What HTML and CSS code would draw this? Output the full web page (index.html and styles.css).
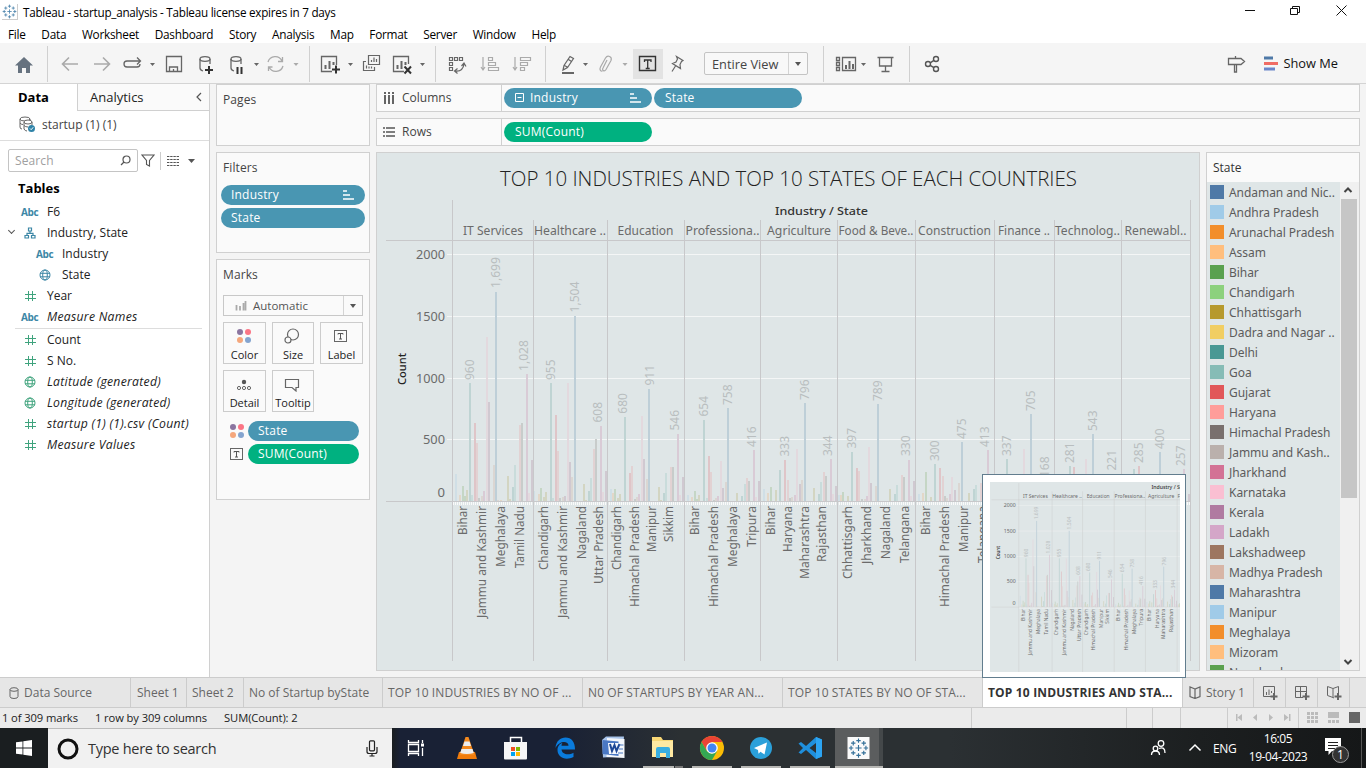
FILE: index.html
```html
<!DOCTYPE html>
<html lang="en">
<head>
<meta charset="utf-8">
<title>Tableau - startup_analysis</title>
<link rel="stylesheet" href="styles.css">
</head>
<body>
<svg class="defs" width="0" height="0">
  <defs>
    <symbol id="i-hash" viewBox="0 0 12 12"><path d="M4.500 1v10M8.500 1v10M1 4.500h11M1 8.500h11" fill="none" stroke="currentColor"/></symbol>
    <symbol id="i-globe" viewBox="0 0 12 12"><g fill="none" stroke="currentColor"><circle cx="6" cy="6" r="5"/><ellipse cx="6" cy="6" rx="2.300" ry="5"/><path d="M1 4.300h10M1 7.800h10"/></g></symbol>
    <symbol id="i-tree" viewBox="0 0 12 12"><path d="M4.500 1h3v3h-3zM1 8.500h3.500v2.500h-3.500zM7.500 8.500h3.500v2.500h-3.500zM6 4v2M3 8.500V6.300h6v2.200" fill="none" stroke="currentColor" stroke-width="1.200"/></symbol>
    <symbol id="i-sort" viewBox="0 0 11 10"><path d="M0 1h4M0 5h7M0 9h11" fill="none" stroke="#fff" stroke-width="1.600"/></symbol>
    <symbol id="i-dots" viewBox="0 0 16 16"><circle cx="4" cy="4" r="3" fill="#8b75a0"/><circle cx="12" cy="4" r="3" fill="#fb7585"/><circle cx="4" cy="12" r="3" fill="#f5a77c"/><circle cx="12" cy="12" r="3" fill="#84a4cf"/></symbol>
    <symbol id="i-text" viewBox="0 0 14 14"><rect x=".5" y="1.500" width="12" height="11" fill="none" stroke="#666"/><path d="M4 5.500V4.500h5v1M6.500 4.500v5.500M5 10h3" fill="none" stroke="#555"/></symbol>
    <symbol id="i-tableau" viewBox="0 0 24 24"><path d="M12 8.500v7M8.500 12h7M12 1v5M9.500 3.500h5M12 18v5M9.500 20.500h5M1 12h5M3.500 9.500v5M18 12h5M20.500 9.500v5M6 4v5M3.500 6.500h5M18 4v5M15.500 6.500h5M6 15v5M3.500 17.500h5M18 15v5M15.500 17.500h5" fill="none" stroke="currentColor" stroke-width="1.300"/></symbol>
  </defs>
</svg>

<header class="titlebar">
  <svg class="appicon" width="16" height="16" viewBox="0 0 24 24"><use href="#i-tableau"/></svg>
  <span class="apptitle">Tableau - startup_analysis - Tableau license expires in 7 days</span>
  <svg class="winbtns" width="130" height="24" viewBox="1236 0 130 24" fill="none" stroke="#111"><path d="M1245 10.500h10M1290.500 8.500h7v6h-7zM1292.500 8.500v-2h7v6h-2M1336.500 5.500l10 10M1346.500 5.500l-10 10"/></svg>
</header>
<nav class="menu">
  <span>File</span><span>Data</span><span>Worksheet</span><span>Dashboard</span><span>Story</span><span>Analysis</span><span>Map</span><span>Format</span><span>Server</span><span>Window</span><span>Help</span>
</nav>

<div class="toolbar">
  <svg class="grp" width="48" height="36" viewBox="0 46 48 36"><path d="M15 65.500L24 57l9 8.500h-3V73h-4v-5h-4v5h-4v-7.500z" fill="#66727f"/></svg>
  <svg class="grp" width="262" height="36" viewBox="48 46 262 36" fill="none" stroke="#666" stroke-width="1.300">
    <path d="M63 64h15M69 57.500L62.500 64l6.500 6.500M94 64h15M103 57.500l6.500 6.500-6.500 6.500" stroke="#aaa" stroke-width="1.600"/>
    <path d="M140 61h-13a3 3 0 0 0-3 3v0a3 3 0 0 0 3 3h10a3 3 0 0 0 3-3M137 57.500l3.500 3.500-3.500 3.500"/>
    <path d="M150 63h5l-2.500 3zM254 63h5l-2.500 3z" fill="#666" stroke="none"/><path d="M293.500 63h5l-2.500 3z" fill="#aaa" stroke="none"/>
    <path d="M166.500 56.500h15v15h-15zM169.500 71v-4h8v4M173.500 69v2"/>
    <g id="db"><ellipse cx="205" cy="59" rx="5" ry="2.300"/><path d="M200 59v9q0 2 3 3M210 59v5"/></g>
    <path d="M209 66v8M205 70h8" stroke="#333" stroke-width="2"/>
    <use href="#db" x="31"/><path d="M237.500 67v7M241.500 67v7" stroke="#333" stroke-width="2"/>
    <path d="M268 62a7.500 7.500 0 0 1 14-1M283 66a7.500 7.500 0 0 1-14 1M282.500 57v4.500H278M268.500 71v-4h4" stroke="#aaa"/>
  </svg>
  <svg class="grp" width="126" height="36" viewBox="310 46 126 36" fill="none" stroke="#666">
    <path d="M332 71.500h-10.500v-15h15V65" stroke-width="1.300"/><path d="M325.500 69v-4M329.500 69v-8M333.500 65v-3" stroke-width="2"/><path d="M336 65.500v8M332 69.500h8" stroke="#333" stroke-width="2"/>
    <path d="M348 63h5l-2.500 3zM420 63h5l-2.500 3z" fill="#666" stroke="none"/>
    <path d="M368.500 55.500h11v9h-11zM366 61.500h-2.500v9h11V67M371.500 62v-2M374 62v-4.500M376.500 62v-3M366.500 68.500v-3M369 68.500v-2M371.500 68.500v-2" stroke-width="1.200"/>
    <path d="M404 71.500h-10.500v-15h15V64" stroke-width="1.300"/><path d="M397.500 69v-4M401.500 69v-8M405.500 65v-3" stroke-width="2"/><path d="M404.500 66.500l6.500 7M411 66.500l-6.500 7" stroke="#333" stroke-width="2"/>
  </svg>
  <svg class="grp" width="110" height="36" viewBox="436 46 110 36" fill="none" stroke="#666" stroke-width="1.200">
    <path d="M449.500 57.500h3v3h-3zM454.500 57.500h3v3h-3zM459.500 57.500h3v3h-3zM449.500 62.500h3v3h-3zM449.500 67.500h3v3h-3zM455 71q8 1 9-7M461.500 66l2.500-3 2 3.500M457.500 68.500l-3 2.500 3 2.500"/>
    <g stroke="#aaa"><path d="M483 57v13M481 67l2 3 2-3M488.500 57.500h4v3h-4zM488.500 62.500h7v3h-7zM488.500 67.500h10v3h-10zM515 57v13M513 67l2 3 2-3M520.500 57.500h10v3h-10zM520.500 62.500h7v3h-7zM520.500 67.500h4v3h-4z"/></g>
  </svg>
  <svg class="plain" width="158" height="36" viewBox="546 46 158 36" fill="none" stroke="#666" stroke-width="1.200">
    <rect x="633" y="49" width="30" height="30" fill="#e3e3e3" stroke="none"/>
    <path d="M563 70l1-4.500 6-9 3.500 2-6 9zM564.500 65.500l3.500 2M568.500 59.500l3 2"/><path d="M562 73h12" stroke-width="2"/>
    <path d="M583 63h5l-2.500 3z" fill="#666" stroke="none"/><path d="M622.500 63h5l-2.500 3z" fill="#aaa" stroke="none"/>
    <path d="M607 60l-4 8c-1.500 2.500 1.500 4 3 1.500l5-9c1.500-4-3.500-6-5.500-2.500l-5 9c-1.500 3 .5 4.500 2 4" stroke="#aaa"/>
    <path d="M639.500 56.500h16v14h-16z" stroke="#333" stroke-width="1.400"/><path d="M644.500 62v-2h6.500v2M647.700 60v8.500M645.700 68.500h4" stroke="#333" stroke-width="1.300"/>
    <path d="M676.500 56.500l6.500 4-1.500 1-1.500 3 .5 4-8-5 3.500-1.500 1.500-3zM675.500 66l-3.500 5.500"/>
  </svg>
  <div class="viewsel"><span>Entire View</span><i><b class="caret"></b></i></div>
  <svg class="grp" width="102" height="36" viewBox="808 46 102 36" fill="none" stroke="#666" stroke-width="1.300">
    <path d="M823.500 46v36" stroke="#d0d0d0" stroke-width="1"/>
    <path d="M836.500 57.500h3v3h-3zM836.500 62.500h3v3h-3zM836.500 67.500h3v3h-3zM842.500 57.500h13v13h-13z"/><path d="M846 69v-4M849.500 69v-8M853 69v-5" stroke-width="2"/><path d="M861 63h5l-2.500 3z" fill="#666" stroke="none"/>
    <path d="M877.500 57.500h16M879.500 57.500v8.500h12v-8.500M885.500 66v5M881.500 71.500h8"/>
  </svg>
  <svg width="40" height="36" viewBox="910 46 40 36" fill="none" stroke="#555" stroke-width="1.400"><circle cx="928" cy="64" r="2.500"/><circle cx="936" cy="59" r="2.500"/><circle cx="936" cy="69" r="2.500"/><path d="M930.200 62.800l3.700-2.400M930.200 65.300l3.700 2.400"/></svg>
  <div class="showme">
    <svg width="56" height="36" viewBox="1224 46 56 36" fill="none"><path d="M1227.500 58.500h12.500l3.500 3-3.500 3h-12.500zM1234.500 58V56M1233.500 65v7h2v-7" stroke="#666" stroke-width="1.300"/><path d="M1263 58h9" stroke="#4e79a7" stroke-width="3"/><path d="M1263 63.500h14" stroke="#f06c64" stroke-width="3"/><path d="M1263 69h11" stroke="#6b86c9" stroke-width="3"/></svg>
    <span>Show Me</span>
  </div>
</div>

<main class="work">
  <aside class="data">
    <div class="tabs2"><b>Data</b><div>Analytics<svg width="8" height="10" viewBox="0 0 8 10"><path d="M6 1L2 5l4 4" fill="none" stroke="#555" stroke-width="1.200"/></svg></div></div>
    <div class="source"><svg width="17" height="17" viewBox="0 0 17 17" fill="none" stroke="#666"><ellipse cx="6" cy="3" rx="5" ry="2"/><path d="M1 3v8q0 2 2 2M11 3v1M1 7q1 1.500 3 1.500"/><ellipse cx="9" cy="6" rx="4" ry="2" fill="#fff"/><path d="M5 6v7q1 2 3 2M13 6v3M5 9.500q1.500 1.500 4 1.500"/><circle cx="12.500" cy="12.500" r="3.500" fill="#2f83a8" stroke="none"/><path d="M11 12.500l1.200 1.200 2-2.400" stroke="#fff"/></svg><span>startup (1) (1)</span></div>
    <div class="searchrow">
      <div class="search"><span>Search</span><svg width="11" height="11" viewBox="0 0 11 11" fill="none" stroke="#555" stroke-width="1.200"><circle cx="6.500" cy="4.500" r="3.500"/><path d="M4 7L1 10"/></svg></div>
      <svg class="funnel" width="14" height="13" viewBox="0 0 14 13"><path d="M1 1h12L8.500 6.500V12l-3-1.500v-4z" fill="none" stroke="#555" stroke-width="1.100"/></svg>
      <svg class="grid" width="36" height="18" viewBox="0 0 36 18"><path d="M.5 0v18" stroke="#ccc"/><path d="M7 4.500h12M7 7.500h12M7 10.500h12M7 13.500h12" stroke="#555" stroke-dasharray="2.400 .8"/><path d="M28 7h7l-3.500 4z" fill="#555"/></svg>
    </div>
    <h3>Tables</h3>
    <ul class="fields">
      <li><em class="abc">Abc</em><span>F6</span></li>
      <li class="open"><svg class="d"><use href="#i-tree"/></svg><span>Industry, State</span></li>
      <li class="sub"><em class="abc">Abc</em><span>Industry</span></li>
      <li class="sub"><svg class="d"><use href="#i-globe"/></svg><span>State</span></li>
      <li><svg class="m"><use href="#i-hash"/></svg><span>Year</span></li>
      <li><em class="abc">Abc</em><span class="it">Measure Names</span></li>
    </ul>
    <ul class="fields measures">
      <li><svg class="m"><use href="#i-hash"/></svg><span>Count</span></li>
      <li><svg class="m"><use href="#i-hash"/></svg><span>S No.</span></li>
      <li><svg class="m"><use href="#i-globe"/></svg><span class="it">Latitude (generated)</span></li>
      <li><svg class="m"><use href="#i-globe"/></svg><span class="it">Longitude (generated)</span></li>
      <li><svg class="m"><use href="#i-hash"/></svg><span class="it">startup (1) (1).csv (Count)</span></li>
      <li><svg class="m"><use href="#i-hash"/></svg><span class="it">Measure Values</span></li>
    </ul>
  </aside>

  <section class="cards">
    <div class="card pages"><h4>Pages</h4></div>
    <div class="card filters"><h4>Filters</h4>
      <div class="pill">Industry<svg width="11" height="10"><use href="#i-sort"/></svg></div>
      <div class="pill">State</div>
    </div>
    <div class="card marks"><h4>Marks</h4>
      <div class="marktype"><svg width="12" height="12" viewBox="0 0 12 12"><path d="M1.500 5v5.500M5 6v4.500M8.500 3v7.500M10.500 1v9.500" stroke="#aaa" stroke-width="1.800"/></svg><span>Automatic</span><i><b class="caret"></b></i></div>
      <div class="btns">
        <div><svg width="16" height="16"><use href="#i-dots"/></svg><span>Color</span></div>
        <div><svg width="16" height="16" viewBox="0 0 16 16" fill="none" stroke="#666" stroke-width="1.200"><circle cx="9" cy="6.500" r="5.500"/><circle cx="4" cy="12" r="3" fill="#fafafa"/></svg><span>Size</span></div>
        <div><svg width="16" height="16" viewBox="-1 -1 16 16"><use href="#i-text" width="14" height="14"/></svg><span>Label</span></div>
        <div><svg width="16" height="16" viewBox="0 0 16 16"><circle cx="8" cy="6" r="2.200" fill="#555"/><g fill="none" stroke="#666"><circle cx="3" cy="12" r="1.600"/><circle cx="8" cy="12" r="1.600"/><circle cx="13" cy="12" r="1.600"/></g></svg><span>Detail</span></div>
        <div><svg width="16" height="16" viewBox="0 0 16 16"><path d="M1.500 3.500h13v8H12v3.500l-4-3.500H1.500z" fill="none" stroke="#666" stroke-width="1.200"/></svg><span>Tooltip</span></div>
      </div>
      <div class="enc"><svg width="16" height="16"><use href="#i-dots"/></svg><div class="pill">State</div></div>
      <div class="enc"><svg width="14" height="14"><use href="#i-text"/></svg><div class="pill green">SUM(Count)</div></div>
    </div>
  </section>

  <section class="view">
    <div class="shelf"><label><svg width="12" height="12" viewBox="0 0 12 12"><path d="M2 3v9M6 3v9M10 3v9M2 0v2M6 0v2M10 0v2" stroke="#555" stroke-width="1.800"/></svg>Columns</label>
      <div class="pill"><svg class="minus" width="9" height="9" viewBox="0 0 9 9"><path d="M.5.5h8v8h-8zM2.500 4.500h4" fill="none" stroke="#fff"/></svg>Industry<svg width="11" height="10"><use href="#i-sort"/></svg></div><div class="pill">State</div></div>
    <div class="shelf"><label><svg width="12" height="12" viewBox="0 0 12 12"><path d="M0 2h2M3 2h9M0 6h2M3 6h9M0 10h2M3 10h9" stroke="#555" stroke-width="1.600"/></svg>Rows</label>
      <div class="pill green">SUM(Count)</div></div>
    <div class="sheet">
      <svg id="chart" class="chart" width="824" height="519" viewBox="376 152 824 519"></svg>
      <div class="legend"><h4>State</h4><div class="lbody"><ul id="states"></ul><div class="scroll"><svg width="16" height="16" viewBox="0 0 16 16"><path d="M4.500 10L8 6.500l3.500 3.500" fill="none" stroke="#444" stroke-width="2"/></svg><i></i><svg width="16" height="16" viewBox="0 0 16 16"><path d="M4.500 6L8 9.500 11.500 6" fill="none" stroke="#444" stroke-width="2"/></svg></div></div></div>
    </div>
  </section>
</main>

<div class="preview"><svg id="thumb" width="190" height="190" viewBox="382.500 198 462 460.500"></svg></div>

<nav class="sheets">
  <div class="t1"><svg width="10" height="12" viewBox="0 0 10 12" fill="none" stroke="#666"><ellipse cx="5" cy="2.500" rx="4" ry="1.800"/><path d="M1 2.500v7q0 2 4 2t4-2v-7"/></svg>Data Source</div>
  <div class="t2">Sheet 1</div><div class="t3">Sheet 2</div><div class="t4">No of Startup byState</div><div class="t5">TOP 10 INDUSTRIES BY NO OF ...</div><div class="t5">N0 OF STARTUPS BY YEAR AN...</div><div class="t5">TOP 10 STATES BY NO OF STA...</div><div class="t5 on">TOP 10 INDUSTRIES AND STA...</div>
  <div class="t6"><svg width="12" height="13" viewBox="0 0 12 13" fill="none" stroke="#666" stroke-width="1.200"><path d="M6 3L1 1v9.500l5 2 5-2V1zM6 3v9"/></svg>Story 1</div>
  <div class="t7"><svg width="16" height="16" viewBox="0 0 16 16" fill="none" stroke="#666"><path d="M9 11.500H1.500v-10h11V8M4.500 10V7M7 10V4.500M9.500 8V6"/><path d="M12 8v7M8.500 11.500h7" stroke-width="2"/></svg></div>
  <div class="t7"><svg width="16" height="16" viewBox="0 0 16 16" fill="none" stroke="#666"><path d="M9 12.500H1.500v-11h11V8M6.500 1.500v11M1.500 6.500h11"/><path d="M12 8v7M8.500 11.500h7" stroke-width="2"/></svg></div>
  <div class="t7"><svg width="16" height="16" viewBox="0 0 16 16" fill="none" stroke="#666"><path d="M8 13l-1-.5-5.500-2v-9L7 3.500l5.500-2V8M7 3.500v9"/><path d="M12 8v7M8.500 11.500h7" stroke-width="2"/></svg></div>
</nav>
<div class="status"><span>1 of 309 marks</span><span>1 row by 309 columns</span><span>SUM(Count): 2</span>
  <svg width="400" height="20" viewBox="966 708 400 20"><path d="M971.500 708v20M1126.500 708v20M1152.500 708v20M1180.500 708v20M1227.500 708v20M1298.500 708v20" stroke="#ccc"/><path d="M1236 714h1.500v7h-1.500zM1242 714v7l-4.500-3.500zM1257 714v7l-4-3.500zM1269 714v7l4-3.500zM1284 714v7l4.500-3.500zM1289 714h1.500v7h-1.500z" fill="#bbb"/><path d="M1307 713.500h11M1307 717.500h11M1307 721.500h11" stroke="#bbb" stroke-width="3" stroke-dasharray="3 1"/><path d="M1328 712h11v6h-11zM1328 720h3v3h-3zM1332 720h3v3h-3zM1336 720h3v3h-3z" fill="#bbb"/><path d="M1349 712h11v11h-11z" fill="#666"/></svg>
</div>

<footer class="taskbar">
  <div class="start"><svg width="16" height="16" viewBox="0 0 16 16" fill="#fff"><path d="M0 2.300l6.500-.9v6.200H0zM7.300 1.300L16 0v7.600H7.300zM0 8.400h6.500v6.200L0 13.700zM7.300 8.400H16V16l-8.700-1.300z"/></svg></div>
  <div class="tsearch"><svg width="22" height="22" viewBox="0 0 22 22"><circle cx="11" cy="11" r="9" fill="none" stroke="#111" stroke-width="3"/></svg><span>Type here to search</span><svg width="12" height="17" viewBox="0 0 12 17" fill="none" stroke="#222" stroke-width="1.200"><rect x="3.500" y=".8" width="5" height="10" rx="1"/><path d="M1 7v4.500q0 2 2 2h6q2 0 2-2V7M6 13.500V16M3.500 16h5"/></svg></div>
  <svg class="apps" width="508" height="40" viewBox="392 728 508 40">
    <rect x="835" y="728" width="44" height="40" fill="#5b5d5e"/><rect x="879" y="728" width="4" height="40" fill="#44484a"/>
    <g fill="none" stroke="#fff" stroke-width="1.300"><path d="M408.500 740v2.500h10V740M408.500 744.500h10v7h-10zM408.500 756v-2.500h10v2.500M422.500 740v3M422.500 748v8"/></g><rect x="421" y="743.500" width="3" height="3" fill="#fff"/>
    <path d="M459 752h16l2 7h-20z" fill="#f07c0c"/><path d="M465.500 737h3l6 18h-15z" fill="#f58a1e"/><path d="M464.500 741.500h5l1.500 4.500h-8zM461.500 749h11l1.300 4q-7 2-13.600 0z" fill="#eee"/>
    <path d="M510.500 743v-5.500h11v5.500" fill="none" stroke="#fff" stroke-width="1.500"/><path d="M504 742h23v16.500q0 1-1 1h-21q-1 0-1-1z" fill="#f6f6f6"/><path d="M511 747h4v4h-4z" fill="#f25022"/><path d="M516 747h4v4h-4z" fill="#7fba00"/><path d="M511 752h4v4h-4z" fill="#00a4ef"/><path d="M516 752h4v4h-4z" fill="#ffb900"/>
    <path d="M555.500 748c.5-7 5-10.500 10-10.500 6 0 9.700 4.500 9.500 12h-13.500c.5 5 7 6 12 3.200v4.300c-8 4-16 .5-16-7 0-4 2.500-6.500 5-7.300-.7 1-1 2-1 3h7c0-5-9-5.500-13 2.300z" fill="#0a7bdc"/>
    <path d="M602 740l4-3.500h18l-2 20-19 1z" fill="#a7c3ea"/><path d="M607 738l17.500 1v19l-18-1z" fill="#f4f7fc"/><path d="M602.500 740l16 1.500v14.500l-16-2z" fill="#4a78c4"/><path d="M608 743h14v11h-13z" fill="#f4f7fc"/><path d="M610 744l2 7 2.500-6 2 6 3-7" fill="none" stroke="#1d4796" stroke-width="2"/><path d="M619.500 745h4M619 749h4M618 753h5" stroke="#4877c0"/>
    <path d="M652 737h9l2 3h10v17h-21z" fill="#f8d775"/><path d="M652 741h21v16h-21z" fill="#ffe9a2"/><path d="M656 758v-9q0-2 2-2h10q2 0 2 2v9h-4v-5h-6v5z" fill="#3aaee0"/>
    <circle cx="712" cy="748" r="12" fill="#fbbc05"/><path d="M701.600 742A12 12 0 0 1 722.400 742H712l-5.200 9z" fill="#ea4335"/><path d="M701.600 742l5.200 9 5.200 3 0 6a12 12 0 0 1-10.400-18z" fill="#34a853"/><path d="M717.200 751l-5.200 9h0l-1-6z" fill="#34a853"/><circle cx="712" cy="748" r="5.800" fill="#fff"/><circle cx="712" cy="748" r="4.500" fill="#4285f4"/>
    <circle cx="761" cy="748" r="11" fill="#2ba0da"/><path d="M754 748l13-5.500-2.500 12-4-2.800-2 2-.5-3.700z" fill="#fff"/>
    <path d="M816 737l6 2.500v17l-6 2.500-10-9-5 4-2.500-1.500 4.500-4.500-4.500-4.500 2.500-1.500 5 4zM816 743l-6.500 5 6.500 5z" fill="#1f8fdc"/><path d="M816 737l6 2.500v17l-6 2.500z" fill="#2ca4f2"/>
    <path d="M847.500 737h22v22h-22z" fill="#fafafa"/><svg x="848" y="737.500" width="21" height="21" color="#336f98"><use href="#i-tableau"/></svg>
    <path d="M643 767h31M692 767h40M741 767h40M790 767h40M835 767h48" stroke="#b7b7b4" stroke-width="2"/><path d="M675 767h8" stroke="#777" stroke-width="2"/>
  </svg>
  <div class="tray">
    <svg width="60" height="40" viewBox="1146 728 60 40" fill="none" stroke="#fff" stroke-width="1.300"><circle cx="1161" cy="743.500" r="2.800"/><circle cx="1155.500" cy="748.500" r="2.300"/><path d="M1151.500 755q0-4 4-4t4 4M1159 748.500q6-2.500 6 4.500"/><path d="M1189.500 750.500l5.500-5.500 5.500 5.500" stroke-width="1.500"/></svg>
    <span class="lang">ENG</span><span class="clock">16:05<br>19-04-2023</span>
    <svg class="notes" width="44" height="40" viewBox="1318 728 44 40"><path d="M1325 738h16v13h-9l-3.500 4v-4h-3.500z" fill="#fff"/><path d="M1328 742.500h10M1328 745.500h10M1328 748.500h7" stroke="#222"/><circle cx="1340.500" cy="754.500" r="8" fill="#333" stroke="#999"/><text x="1340.500" y="759" fill="#fff" font-size="12" text-anchor="middle">1</text><path d="M1361.500 728v40" stroke="#555"/></svg>
  </div>
</footer>
<script src="chart.js"></script>
</body>
</html>
```
FILE: styles.css
```css
* { box-sizing: border-box; }
body { margin: 0; width: 1366px; height: 768px; overflow: hidden; background: #f4f4f4; font-family: "Open Sans", "Noto Sans", sans-serif; font-size: 12px; color: #222; display: flex; flex-direction: column; position: relative; }
h3, h4, ul { margin: 0; padding: 0; list-style: none; font-weight: normal; }
svg { display: block; flex: none; }
.defs { position: absolute; }

.titlebar { height: 24px; background: #fff; display: flex; align-items: center; padding-left: 2px; flex: none; color: #000; }
.appicon { color: #4a83ab; border-right: 1px solid #ccc; border-bottom: 1px solid #ccc; }
.apptitle { margin-left: 5px; letter-spacing: -.25px; font-size: 11.7px; padding-bottom: 1px; }
.winbtns { margin-left: auto; }
.menu { height: 19px; background: #fff; display: flex; align-items: center; gap: 15.700px; padding-left: 8px; flex: none; color: #000; font-size: 11.8px; letter-spacing: -.25px; }

.toolbar { height: 41px; display: flex; align-items: center; flex: none; border-bottom: 1px solid #d4d4d4; background: #f5f5f5; padding-top: 1px; }
.grp { box-shadow: inset -1px 0 #d0d0d0; }
.viewsel { width: 104px; height: 23px; border: 1px solid #c4c4c4; border-radius: 2px; display: flex; align-items: center; color: #444; padding-left: 7px; background: #f8f8f8; }
.viewsel span { flex: 1; white-space: nowrap; font-size: 12.8px; }
.viewsel i, .marktype i { width: 19px; align-self: stretch; border-left: 1px solid #d4d4d4; display: flex; align-items: center; justify-content: center; }
.caret { border: 3.500px solid transparent; border-top: 4.500px solid #555; border-bottom: 0; }
.showme { margin-left: auto; display: flex; align-items: center; color: #111; font-size: 12.8px; padding-right: 28px; gap: 3px; }
.showme span { padding-bottom: 2px; }

.work { height: 593px; display: flex; flex: none; }
.data { width: 210px; background: #fff; border-right: 1px solid #d0d0d0; }
.tabs2 { height: 27px; display: flex; font-size: 13px; color: #222; }
.tabs2 b { width: 77px; padding: 4px 0 0 18px; color: #000; }
.tabs2 div { flex: 1; border-left: 1px solid #d0d0d0; border-bottom: 1px solid #d0d0d0; background: #fafafa; display: flex; align-items: center; justify-content: space-between; padding: 0 6px 1px 12px; }
.source { height: 30px; display: flex; align-items: center; border-bottom: 1px solid #ddd; color: #444; gap: 6px; padding: 0 0 2px 19px; }
.searchrow { display: flex; align-items: center; padding: 8px 0 0 8px; }
.search { width: 130px; height: 23px; border: 1px solid #c4c4c4; border-radius: 2px; display: flex; align-items: center; justify-content: space-between; padding: 0 6px; color: #a0a0a0; }
.search span { letter-spacing: .1px; }
.funnel { margin: 0 6px 0 3px; }
.grid { margin-left: -1px; }
h3 { font-weight: bold; font-size: 13px; color: #000; margin: 8px 0 4px 18px; line-height: 17px; }
.fields { color: #222; }
.fields li { height: 21px; display: flex; align-items: center; padding-left: 21px; font-size: 12px; position: relative; white-space: nowrap; }
.fields li > :first-child { width: 16px; flex: none; margin-right: 10px; height: 12px; }
.fields svg { padding-left: 2px; }
.fields .sub { padding-left: 36px; }
.d { color: #3c87a6; } .m { color: #3fa37d; }
.abc { font: bold 10px/13px "Open Sans", sans-serif; color: #3c87a6; letter-spacing: -.4px; }
.it { font-style: italic; font-size: 12.2px; letter-spacing: .28px; }
.open::before { content: ""; position: absolute; left: 9px; top: 6px; width: 4px; height: 4px; border: solid #555; border-width: 0 1.500px 1.500px 0; transform: rotate(45deg); }
.measures { margin: 1px 7px 0 15px; border-top: 1px solid #ddd; }
.measures li { padding-left: 6px; }

.cards { width: 160px; margin-left: 6px; }
.card { width: 154px; border: 1px solid #d0d0d0; background: #fafafa; margin-bottom: 6px; }
.card h4 { font-size: 12px; color: #444; padding: 6px 0 0 6px; height: 32px; line-height: 17px; letter-spacing: .1px; }
.pages { height: 62px; } .filters { height: 101px; margin-bottom: 6px; } .marks { height: 241px; }
.pill { height: 20px; border-radius: 10px; background: #4996b2; color: #fff; display: flex; align-items: center; justify-content: space-between; padding: 0 11px 1px; font-size: 12px; letter-spacing: .2px; }
.green { background: #00b180; }
.filters .pill { margin: 0 4px 3px; padding-left: 10px; }
.marktype { margin: 3px 6px 6px; height: 21px; border: 1px solid #c8c8c8; display: flex; align-items: center; color: #555; padding-left: 11px; font-size: 11.5px; }
.marktype span { flex: 1; padding-left: 6px; }
.btns { display: grid; grid-template-columns: 43px 42px 43px; gap: 6px 6px; padding: 0 6px; }
.btns div { height: 42px; border: 1px solid #ccc; display: flex; flex-direction: column; align-items: center; font-size: 11px; padding-top: 5px; gap: 3px; }
.btns span { line-height: 15px; }
.btns svg { margin-right: 2px; }
.enc { display: flex; align-items: center; margin: 9px 0 0 12px; height: 20px; }
.enc + .enc { margin-top: 3px; }
.enc svg { width: 16px; }
.enc .pill { width: 111px; margin-left: 3px; padding-left: 10px; }

.view { width: 984px; }
.shelf { height: 28px; border: 1px solid #d0d0d0; background: #fafafa; display: flex; align-items: center; margin-bottom: 6px; gap: 2px; }
.shelf label { width: 125px; height: 26px; border-right: 1px solid #d0d0d0; display: flex; align-items: center; padding: 0 0 1px 6px; gap: 7px; color: #444; }
.shelf .pill { width: 148px; justify-content: flex-start; }
.minus { margin-right: 6px; }
.shelf .pill svg:last-child { margin-left: auto; }
.sheet { display: flex; gap: 6px; }
.chart { background: #dfe6e7; outline: 1px solid #d0d0d0; outline-offset: -1px; }
.legend { width: 154px; height: 519px; border: 1px solid #d0d0d0; background: #fafafa; overflow: hidden; }
.legend h4 { height: 29px; padding: 6px 0 0 6px; line-height: 17px; color: #333; }
.lbody { display: flex; height: 488px; background: #dfe6e7; }
.lbody ul { flex: 1; padding-left: 3px; overflow: hidden; }
.lbody li { height: 20px; display: flex; align-items: center; gap: 5px; white-space: nowrap; font-family: "Noto Sans", sans-serif; color: #5c5c5c; letter-spacing: -.05px; }
.lbody li i { width: 14px; height: 14px; }
.scroll { width: 19px; background: #f0f0f0; display: flex; flex-direction: column; padding-right: 1px; }
.scroll i { height: 299px; background: #c6c6c6; margin: 1px 1px auto; }

.preview { position: absolute; left: 982px; top: 474px; width: 204px; height: 204px; border: 1px solid #627d8e; background: #fff; padding: 7px; }
.preview svg { background: #dfe6e7; }

.sheets { height: 31px; background: #e6e6e6; border-top: 1px solid #ccc; border-bottom: 1px solid #ccc; display: flex; flex: none; color: #666; }
.sheets div { border-right: 1px solid #ccc; display: flex; align-items: center; white-space: nowrap; padding-left: 6px; overflow: hidden; }
.sheets .t1 { width: 131px; padding-left: 9px; gap: 5px; }
.t2 { width: 56px; } .t3 { width: 57px; } .t4 { width: 139px; } .t5 { width: 200px; letter-spacing: .1px; }
.sheets .t3, .sheets .t4, .sheets .t5 { padding-left: 5px; }
.sheets .on { background: #fff; color: #333; font-weight: bold; font-size: 12px; letter-spacing: .17px; }
.t6 { width: 71px; gap: 5px; } .t7 { width: 32px; } .sheets .t7 { padding-left: 8px; }
.status { height: 20px; background: #ebebeb; display: flex; align-items: center; gap: 17px; padding-left: 2px; flex: none; font-size: 11.2px; letter-spacing: -.09px; }
.status span { padding-bottom: 1px; }
.status svg { margin-left: auto; }

.taskbar { height: 40px; display: flex; background: linear-gradient(90deg, #1a1e20 0, #1a1e20 392px, #192135 400px, #192135 560px, #2b3033 680px, #2b3033 950px, #1c1f20 1200px, #151718 100%); flex: none; color: #fff; }
.start { width: 48px; display: flex; align-items: center; justify-content: center; }
.tsearch { width: 344px; background: #f1f1f1; display: flex; align-items: center; padding: 0 14px 0 9px; color: #333; font-size: 14.5px; border-top: 1px solid #bbb; }
.tsearch span { flex: 1; padding-left: 9px; letter-spacing: -.27px; }
.tray { margin-left: auto; display: flex; align-items: center; width: 220px; }
.lang { width: 29px; margin-left: 7px; letter-spacing: -.4px; }
.clock { width: 72px; text-align: center; line-height: 18px; letter-spacing: -.4px; white-space: nowrap; }
.notes { margin-left: 4px; }
```
FILE: chart.js
```js
const colors = {
  T: '#bfd4d3', t: '#c9dcdb', R: '#dfc5c8', r: '#e2d2d3', k: '#e3d9de', B: '#becfd8', p: '#d9cbd6',
  u: '#d0c9d1', y: '#c8cccb', o: '#d3d5c2', g: '#c5d6c5', b: '#d0dfe6', a: '#e3d7c8', n: '#dbd6d2'
};
// Each mark: x centre, top, colour key. Coordinates are thirds of a pixel from the group's origin.
const left = '240,312,b 252,376,a 261,348,g 267,378,g 273,360,o 282,39,T 288,375,t 297,159,R 303,219,r 309,384,y 318,378,n 324,363,p 333,-100,k 339,96,u 354,285,n 360,-234,B 366,390,n 375,389,a 396,318,o 402,388,o 411,351,T 417,285,t 432,165,r 438,159,y 453,12,p 459,370,k 468,270,u ' +
  '474,363,b 489,372,a 495,354,g 504,380,o 510,366,o 525,39,T 531,384,t 540,135,R 546,243,r 552,384,y 561,382,n 567,378,u 576,40,k 582,276,u 588,321,n 597,-162,B 624,342,o 630,389,o 639,363,T 645,324,t 654,237,r 660,207,y 675,168,p 681,365,k 690,303,u ' +
  '705,357,b 711,369,a 717,357,g 726,384,o 732,372,o 747,141,T 762,309,R 768,288,r 777,387,y 783,381,n 789,372,p 798,138,k 804,267,u 813,327,n 819,57,B 849,351,o 855,389,o 864,369,T 870,309,t 885,291,r 891,291,y 906,192,p 912,376,k 921,321,u ' +
  '936,375,b 948,381,a 957,363,g 963,387,g 969,375,o 984,150,T 993,384,t 999,258,R 1005,306,r 1014,389,y 1020,384,n 1026,378,p 1035,273,k 1041,354,u 1050,336,n 1056,114,B 1083,369,o 1098,378,T 1107,342,t 1113,324,r 1119,333,y 1134,240,p 1140,382,k 1149,333,u ' +
  '1164,357,b 1176,369,a 1185,351,g 1200,360,o 1212,300,T 1227,270,R 1236,330,r 1242,384,y 1248,381,n';
const right = '45,375,p 51,237,k 60,342,u 66,330,n 75,99,B 102,354,o 117,372,T 123,336,t 132,306,r 138,318,y 153,267,p 159,372,k 168,348,u ' +
  '177,375,b 183,375,a 189,366,g 204,378,o 216,246,T 231,294,R 237,303,r 246,387,y 255,387,n 261,378,p 267,231,k 273,339,u 288,348,n 294,102,B 330,357,o 345,372,T 351,345,t 366,315,r 372,321,y 387,270,p 393,378,k 402,333,u ' +
  '417,372,b 429,369,a 438,306,g 453,381,o 465,282,T 480,294,R 489,318,r 495,378,y 501,384,n 510,372,p 516,321,k 525,360,u 537,339,n 546,216,B 567,369,o 582,356,T 588,345,t 603,339,r 624,240,p ' +
  '681,267,T 732,237,k 753,132,B 870,288,T 882,291,R 918,267,k 939,192,B 1062,297,T 1077,288,R 1140,246,B 1212,297,p 1227,372,u';

function plot(limit) {
  const out = [];
  const text = (x, y, s, len, extra) =>
    out.push(`<text x="${x}" y="${y}" ${len ? `textLength="${len}" lengthAdjust="spacingAndGlyphs"` : ''} ${extra || ''}>${s}</text>`);
  const line = (x1, y1, x2, y2, c) => out.push(`<path d="M${x1} ${y1}L${x2} ${y2}" stroke="${c}"/>`);
  const shown = ([x]) => x < limit;

  [[254.5, 2000], [316.5, 1500], [378.5, 1000], [439.5, 500]].forEach(([y, v]) => {
    line(447, y, 1190, y, '#f4f6f6');
    text(445, y + 4.5, v, v > 900 ? 29 : 22, 'text-anchor="end" fill="#6b6b6b" font-size="12"');
  });
  text(445, 497, 0, 7.5, 'text-anchor="end" fill="#6b6b6b" font-size="12"');

  const bars = (data, ox) => data.split(' ').forEach(m => {
    const [x, y, c] = m.split(',');
    const top = Math.round(370 + y / 3);
    out.push(`<rect x="${Math.round(ox + x / 3 - 1)}" y="${top}" width="2" height="${501 - top}" fill="${colors[c]}"/>`);
  });
  bars(left, 376);
  bars(right, 780);
  out.push('<path d="M453 503.500H1190" stroke="#fafafa" stroke-width="3" stroke-dasharray="1 1"/>');

  [452.5, 1190.5].forEach(x => line(x, 200, x, 661, '#c8c8ca'));
  [533.5, 607.5, 684.5, 760.5, 837.5, 915.5, 994.5, 1054.5, 1121.5].forEach(x => line(x, 220, x, 661, '#c8c8ca'));
  line(386, 240.5, 1190, 240.5, '#c8c8ca');
  line(386, 501.5, 1190, 501.5, '#c8c8ca');

  [[463, 'IT Services', 60], [534, 'Healthcare ..', 72], [617.5, 'Education', 56], [685.5, 'Professiona..', 74], [767, 'Agriculture', 64],
   [838.5, 'Food &amp; Beve..', 75], [918, 'Construction', 73], [998, 'Finance ..', 52], [1055, 'Technolog..', 65], [1124.5, 'Renewabl..', 62]]
    .filter(shown).forEach(([x, s, l]) => text(x, 235, s, l, 'fill="#6b6b6b" font-size="12"'));
  text(775, 215, 'Industry / State', 93, 'fill="#333" font-size="11.5" font-weight="500"');

  const vertical = (x, y, s, len, anchor, attrs) =>
    text(0, 0, s, len, `text-anchor="${anchor}" transform="translate(${x + 4.3} ${y}) rotate(-90)" ${attrs}`);
  vertical(401.5, 385, 'Count', 32, 'start', 'fill="#222" font-size="11.5" font-weight="500"');

  [[469.7, 380, '960'], [495.7, 288, '1,699'], [523.8, 371, '1,028'], [551, 380, '955'], [575, 312.5, '1,504'], [598, 422.5, '608'],
   [622.5, 413.7, '680'], [649.3, 385.5, '911'], [674.5, 430.5, '546'], [704, 416.5, '654'], [727.7, 405, '758'], [751.3, 447, '416'],
   [785, 456.5, '333'], [805, 400, '796'], [828, 456, '344'], [852, 448.5, '397'], [878, 401, '789'], [905.5, 456, '330'],
   [935, 461, '300'], [961.5, 439, '475'], [985, 447, '413'], [1007, 456, '337'], [1031, 411, '705'], [1045, 477, '168'],
   [1070, 463, '281'], [1092.5, 431, '543'], [1112, 470.5, '221'], [1138.5, 463, '285'], [1160, 449, '400'], [1181, 466, '257']]
    .filter(shown).forEach(([x, y, s]) => vertical(x, y, s, s.length > 3 ? 31 : 20.5, 'start', 'fill="#b9bebf" font-size="12"'));

  const lens = { 'Bihar': 29, 'Jammu and Kashmir': 112, 'Meghalaya': 61, 'Tamil Nadu': 62, 'Chandigarh': 64, 'Nagaland': 53, 'Uttar Pradesh': 78,
    'Himachal Pradesh': 101, 'Manipur': 46, 'Sikkim': 36, 'Tripura': 41, 'Haryana': 46, 'Maharashtra': 73, 'Rajasthan': 56,
    'Chhattisgarh': 73, 'Jharkhand': 58, 'Telangana': 57 };
  [[462.7, 'Bihar'], [481.3, 'Jammu and Kashmir'], [500.7, 'Meghalaya'], [519.3, 'Tamil Nadu'], [543.3, 'Chandigarh'], [562.7, 'Jammu and Kashmir'],
   [581.3, 'Nagaland'], [598.7, 'Uttar Pradesh'], [617, 'Chandigarh'], [634.3, 'Himachal Pradesh'], [652, 'Manipur'], [668.3, 'Sikkim'],
   [695, 'Bihar'], [714, 'Himachal Pradesh'], [732.7, 'Meghalaya'], [751.3, 'Tripura'], [770.7, 'Bihar'], [788, 'Haryana'], [804.7, 'Maharashtra'],
   [822, 'Rajasthan'], [848, 'Chhattisgarh'], [866.7, 'Jharkhand'], [885.3, 'Nagaland'], [904.7, 'Telangana'], [925.3, 'Bihar'],
   [944.7, 'Himachal Pradesh'], [964, 'Manipur'], [982.7, 'Telangana']]
    .filter(shown).forEach(([x, s]) => vertical(x, 506, s, lens[s], 'end', 'fill="#6b6b6b" font-size="12"'));

  return `<g font-family="Noto Sans, sans-serif">${out.join('')}</g>`;
}

document.getElementById('thumb').innerHTML = plot(842);
document.getElementById('chart').innerHTML = plot(1200) +
  '<text x="500" y="185.500" textLength="577" font-family="Open Sans, sans-serif" font-weight="300" font-size="19.5" lengthAdjust="spacingAndGlyphs" fill="#222">TOP 10 INDUSTRIES AND TOP 10 STATES OF EACH COUNTRIES</text>';

const palette = ['#4e79a7', '#a0cbe8', '#f28e2b', '#ffbe7d', '#59a14f', '#8cd17d', '#b6992d', '#f1ce63', '#499894', '#86bcb6',
  '#e15759', '#ff9d9a', '#79706e', '#bab0ac', '#d37295', '#fabfd2', '#b07aa1', '#d4a6c8', '#9d7660', '#d7b5a6'];
const names = ['Andaman and Nic..', 'Andhra Pradesh', 'Arunachal Pradesh', 'Assam', 'Bihar', 'Chandigarh', 'Chhattisgarh', 'Dadra and Nagar ..',
  'Delhi', 'Goa', 'Gujarat', 'Haryana', 'Himachal Pradesh', 'Jammu and Kash..', 'Jharkhand', 'Karnataka', 'Kerala', 'Ladakh', 'Lakshadweep',
  'Madhya Pradesh', 'Maharashtra', 'Manipur', 'Meghalaya', 'Mizoram', 'Nagaland'];
document.getElementById('states').innerHTML = names
  .map((n, i) => `<li><i style="background:${palette[i % palette.length]}"></i>${n}</li>`).join('');
```
